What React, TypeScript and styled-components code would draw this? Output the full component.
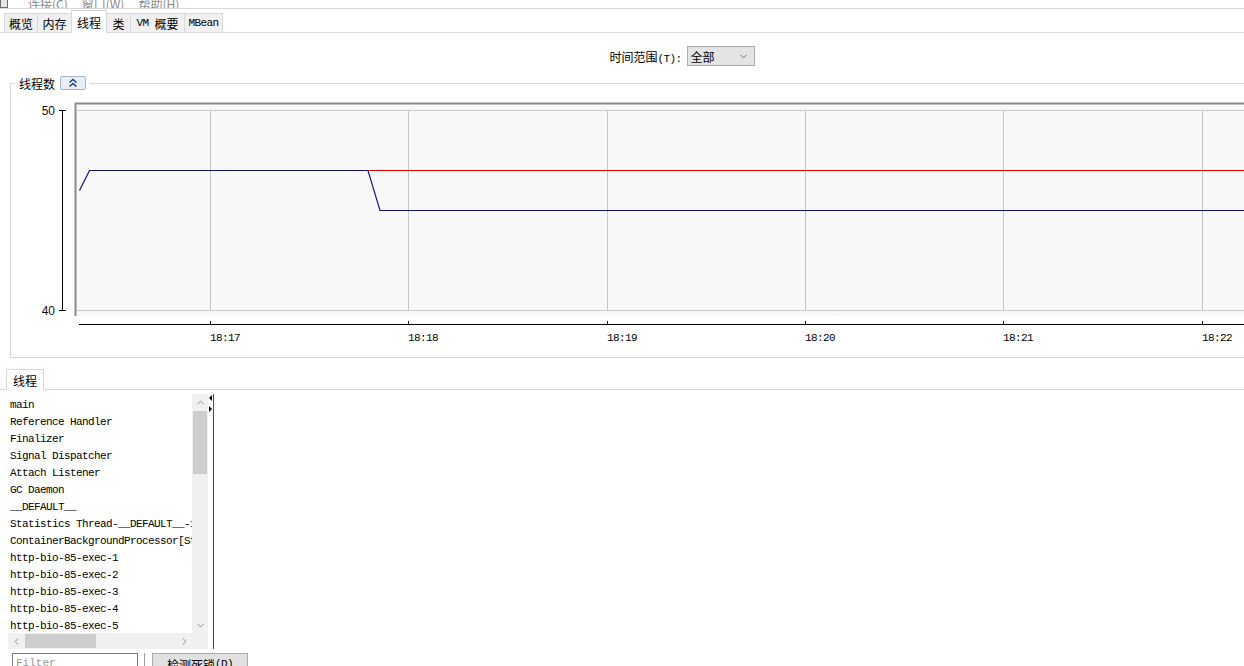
import React from 'react';
import styled, { createGlobalStyle } from 'styled-components';
import { ChevronUp, ChevronDown, ChevronLeft, ChevronRight } from 'lucide-react';

const CJK = `"Noto Sans CJK SC", "Liberation Sans", sans-serif`;
const MONO = `"Liberation Mono", "Noto Sans CJK SC", monospace`;

const GlobalStyle = createGlobalStyle`
  html, body {
    margin: 0;
    padding: 0;
    background: #fff;
    overflow: hidden;
  }
  body {
    font-family: ${CJK};
    font-size: 12px;
    color: #000;
  }
`;

const THREADS = [
  'main',
  'Reference Handler',
  'Finalizer',
  'Signal Dispatcher',
  'Attach Listener',
  'GC Daemon',
  '__DEFAULT__',
  'Statistics Thread-__DEFAULT__-1',
  'ContainerBackgroundProcessor[StandardEngine[Catalina]]',
  'http-bio-85-exec-1',
  'http-bio-85-exec-2',
  'http-bio-85-exec-3',
  'http-bio-85-exec-4',
  'http-bio-85-exec-5',
  'http-bio-85-exec-6',
  'http-bio-85-exec-7',
];

// tab widths taken from the window, border to border
const TABS = [
  { label: '概览', width: 34 },
  { label: '内存', width: 35 },
  { label: '线程', width: 36, active: true },
  { label: '类', width: 25 },
  { label: 'VM', width: 55 },
  { label: 'MBean', width: 39 },
];

// x positions of minute ticks, in page pixels
const TICKS = [
  { x: 210, label: '18:17' },
  { x: 408, label: '18:18' },
  { x: 607, label: '18:19' },
  { x: 805, label: '18:20' },
  { x: 1003, label: '18:21' },
  { x: 1202, label: '18:22' },
];

export default function App(): JSX.Element {
  return (
    <Page>
      <GlobalStyle />
      <TitleStrip>
        <WindowIcon />
        <MenuText>连接(C)</MenuText>
        <MenuText>窗口(W)</MenuText>
        <MenuText>帮助(H)</MenuText>
      </TitleStrip>

      <TabBar>
        {TABS.map((tab) => (
          <Tab key={tab.label} $active={!!tab.active} $width={tab.width}>
            {tab.label === 'VM' ? (
              <>
                <TabMono>VM</TabMono>
                <Gap />
                概要
              </>
            ) : tab.label === 'MBean' ? (
              <TabMono>{tab.label}</TabMono>
            ) : (
              tab.label
            )}
          </Tab>
        ))}
      </TabBar>

      <TimeRow>
        <span>
          时间范围<Mono>(T):</Mono>
        </span>
        <Combo>
          <span>全部</span>
          <ChevronDown size={11} strokeWidth={1.6} color="#444" />
        </Combo>
      </TimeRow>

      <GroupBox>
        <Legend>
          <span>线程数</span>
          <CollapseButton>
            <svg width="24" height="12" viewBox="0 0 24 12">
              <polyline points="8.5,5.5 12,2.5 15.5,5.5" fill="none" stroke="#1d3f86" strokeWidth="1.5" />
              <polyline points="8.5,9.5 12,6.5 15.5,9.5" fill="none" stroke="#1d3f86" strokeWidth="1.5" />
            </svg>
          </CollapseButton>
        </Legend>
        <Chart width="1342" height="266" viewBox="11 91 1342 266">
          {/* y axis */}
          <line x1="62.5" y1="110" x2="62.5" y2="311" stroke="#000" />
          <line x1="59" y1="110.5" x2="66" y2="110.5" stroke="#000" />
          <line x1="59" y1="310.5" x2="66" y2="310.5" stroke="#000" />
          <AxisLabel x="55" y="115" textAnchor="end">50</AxisLabel>
          <AxisLabel x="55" y="315" textAnchor="end">40</AxisLabel>

          {/* plot frame */}
          <rect x="75" y="103" width="1280" height="213" fill="#f8f8f8" />
          <line x1="75" y1="103.5" x2="1355" y2="103.5" stroke="#8a8a8a" strokeWidth="2" />
          <line x1="75.5" y1="103" x2="75.5" y2="316" stroke="#8a8a8a" strokeWidth="2" />
          <line x1="77" y1="110.5" x2="1355" y2="110.5" stroke="#cbcbcb" />
          <line x1="77" y1="310.5" x2="1355" y2="310.5" stroke="#cbcbcb" />
          {TICKS.map((t) => (
            <line key={t.x} x1={t.x + 0.5} y1="110" x2={t.x + 0.5} y2="310" stroke="#c6c6c6" />
          ))}

          {/* series */}
          <polyline points="368,170.5 1355,170.5" fill="none" stroke="#d40000" strokeWidth="1.1" />
          <polyline
            points="79.5,190.5 89.5,170.5 368,170.5 380,210.5 1355,210.5"
            fill="none"
            stroke="#14147e"
            strokeWidth="1.2"
          />

          {/* x axis */}
          <line x1="79" y1="324.5" x2="1355" y2="324.5" stroke="#000" />
          {TICKS.map((t) => (
            <g key={t.label}>
              <line x1={t.x + 0.5} y1="321" x2={t.x + 0.5} y2="325" stroke="#000" />
              <TimeLabel x={t.x + 15} y="341" textAnchor="middle">
                {t.label}
              </TimeLabel>
            </g>
          ))}
        </Chart>
      </GroupBox>

      <ThreadTabBar>
        <ThreadTab>线程</ThreadTab>
      </ThreadTabBar>

      <Split>
        <ListPanel>
          <ThreadList>
            {THREADS.map((name) => (
              <ThreadRow key={name}>{name}</ThreadRow>
            ))}
          </ThreadList>
          <VScroll>
            <ArrowCell>
              <ChevronUp size={11} strokeWidth={1.5} color="#606060" />
            </ArrowCell>
            <VThumb />
            <Spacer />
            <ArrowCell>
              <ChevronDown size={11} strokeWidth={1.5} color="#606060" />
            </ArrowCell>
          </VScroll>
          <HScroll>
            <ArrowCell>
              <ChevronLeft size={11} strokeWidth={1.5} color="#606060" />
            </ArrowCell>
            <HThumb />
            <Spacer />
            <ArrowCell>
              <ChevronRight size={11} strokeWidth={1.5} color="#606060" />
            </ArrowCell>
          </HScroll>
          <Corner />
        </ListPanel>
        <Divider>
          <Arrow $dir="left" />
          <Arrow $dir="right" />
        </Divider>
        <DetailArea />
      </Split>

      <BottomRow>
        <FilterInput placeholder="Filter" />
        <Separator />
        <DetectButton>
          检测死锁<Mono>(D)</Mono>
        </DetectButton>
      </BottomRow>
    </Page>
  );
}

const Page = styled.div`
  width: 1364px;
  height: 666px;
  overflow: hidden;
`;

const Mono = styled.span`
  font-family: ${MONO};
  font-size: 11px;
  letter-spacing: -0.6px;
`;

const TabMono = styled.span`
  font-family: ${MONO};
  font-size: 11px;
  letter-spacing: -0.6px;
`;

const Gap = styled.span`
  display: inline-block;
  width: 6px;
`;

const TitleStrip = styled.div`
  height: 8px;
  border-bottom: 1px solid #d6d6d6;
  overflow: hidden;
  display: flex;
  align-items: flex-end;
  gap: 14px;
  padding-left: 0;
`;

const WindowIcon = styled.div`
  width: 8px;
  height: 14px;
  flex: none;
  margin-right: 6px;
  border: 1px solid #6d6d6d;
  background: #e6e6e6;
  box-sizing: border-box;
`;

const MenuText = styled.span`
  font-size: 12px;
  line-height: 13px;
  margin-bottom: -2px;
  color: #8a8a8a;
  flex: none;
`;

const TabBar = styled.div`
  display: flex;
  align-items: flex-end;
  height: 23px;
  padding-left: 4px;
  border-bottom: 1px solid #d9d9d9;
`;

const Tab = styled.div<{ $active: boolean; $width: number }>`
  box-sizing: border-box;
  width: ${({ $width }) => $width}px;
  height: ${({ $active }) => ($active ? '23px' : '19px')};
  margin-bottom: ${({ $active }) => ($active ? '-1px' : '0')};
  margin-left: -1px;
  display: flex;
  align-items: center;
  justify-content: center;
  border: 1px solid #d9d9d9;
  border-bottom: none;
  background: ${({ $active }) => ($active ? '#fff' : '#f0f0f0')};
  position: relative;
  z-index: ${({ $active }) => ($active ? 1 : 0)};
  font-size: 12px;
  white-space: nowrap;

  &:first-child {
    margin-left: 0;
  }
`;

const TimeRow = styled.div`
  display: flex;
  justify-content: center;
  align-items: center;
  gap: 5px;
  margin-top: 13px;
  height: 20px;
  font-size: 12px;
`;

const Combo = styled.div`
  box-sizing: border-box;
  width: 68px;
  height: 20px;
  border: 1px solid #adadad;
  background: #e4e4e4;
  display: flex;
  align-items: center;
  justify-content: space-between;
  padding: 0 5px 0 3px;
`;

const GroupBox = styled.fieldset`
  margin: 9px 10px 0 10px;
  padding: 0;
  min-width: 0;
  border: 1px solid #d7d7d7;
`;

const Legend = styled.legend`
  margin-left: 4px;
  padding: 0 4px;
  height: 16px;
  display: flex;
  align-items: center;
  gap: 5px;
  font-size: 12px;
`;

const CollapseButton = styled.div`
  box-sizing: border-box;
  width: 26px;
  height: 14px;
  border: 1px solid #a9b4c2;
  border-radius: 2px;
  background: #e9eef4;
  display: flex;
  align-items: center;
  justify-content: center;
`;

const Chart = styled.svg`
  display: block;
`;

const AxisLabel = styled.text`
  font-family: "Liberation Sans", sans-serif;
  font-size: 12px;
  fill: #111;
`;

const TimeLabel = styled.text`
  font-family: "Liberation Mono", monospace;
  font-size: 11px;
  letter-spacing: -0.6px;
  fill: #000;
`;

const ThreadTabBar = styled.div`
  display: flex;
  align-items: flex-end;
  height: 20px;
  margin-top: 11px;
  padding-left: 6px;
  border-bottom: 1px solid #d9d9d9;
`;

const ThreadTab = styled.div`
  box-sizing: border-box;
  height: 21px;
  margin-bottom: -1px;
  padding: 0 6px;
  display: flex;
  align-items: center;
  border: 1px solid #d9d9d9;
  border-bottom: none;
  background: #fff;
  font-size: 12px;
`;

const Split = styled.div`
  display: flex;
  margin-top: 4px;
  height: 255px;
`;

const ListPanel = styled.div`
  margin-left: 8px;
  width: 200px;
  display: grid;
  grid-template-columns: 184px 16px;
  grid-template-rows: 239px 16px;
`;

const ThreadList = styled.div`
  overflow: hidden;
  padding: 3px 0 0 2px;
  background: #fff;
`;

const ThreadRow = styled.div`
  font-family: ${MONO};
  font-size: 11px;
  letter-spacing: -0.6px;
  line-height: 17px;
  height: 17px;
  white-space: nowrap;
`;

const VScroll = styled.div`
  background: #f0f0f0;
  display: flex;
  flex-direction: column;
`;

const HScroll = styled.div`
  background: #f0f0f0;
  display: flex;
  align-items: center;
`;

const ArrowCell = styled.div`
  width: 16px;
  height: 16px;
  flex: none;
  display: flex;
  align-items: center;
  justify-content: center;
`;

const VThumb = styled.div`
  margin: 1px 1px 0;
  height: 63px;
  background: #cdcdcd;
`;

const HThumb = styled.div`
  margin-left: 1px;
  width: 71px;
  height: 14px;
  background: #cdcdcd;
`;

const Spacer = styled.div`
  flex: 1;
`;

const Corner = styled.div`
  background: #f0f0f0;
`;

const Divider = styled.div`
  width: 4px;
  border-right: 1px solid #4d4d4d;
  display: flex;
  flex-direction: column;
  align-items: flex-start;
  gap: 5px;
  padding: 1px 0 0 1px;
`;

const Arrow = styled.div<{ $dir: 'left' | 'right' }>`
  width: 0;
  height: 0;
  border-top: 3px solid transparent;
  border-bottom: 3px solid transparent;
  ${({ $dir }) => ($dir === 'left' ? 'border-right: 3px solid #000;' : 'border-left: 3px solid #000;')}
`;

const DetailArea = styled.div`
  flex: 1;
  background: #fff;
`;

const BottomRow = styled.div`
  display: flex;
  align-items: flex-start;
  margin-top: 4px;
  padding-left: 12px;
`;

const FilterInput = styled.input`
  box-sizing: border-box;
  width: 126px;
  height: 20px;
  border: 1px solid #7a7a7a;
  padding: 0 3px;
  font-family: ${MONO};
  font-size: 11px;
  outline: none;

  &::placeholder {
    color: #9a9a9a;
  }
`;

const Separator = styled.div`
  margin-left: 6px;
  width: 1px;
  height: 18px;
  background: #a0a0a0;
`;

const DetectButton = styled.div`
  box-sizing: border-box;
  margin-left: 7px;
  width: 96px;
  height: 22px;
  border: 1px solid #adadad;
  background: #e1e1e1;
  display: flex;
  align-items: center;
  justify-content: center;
  font-size: 12px;
`;
